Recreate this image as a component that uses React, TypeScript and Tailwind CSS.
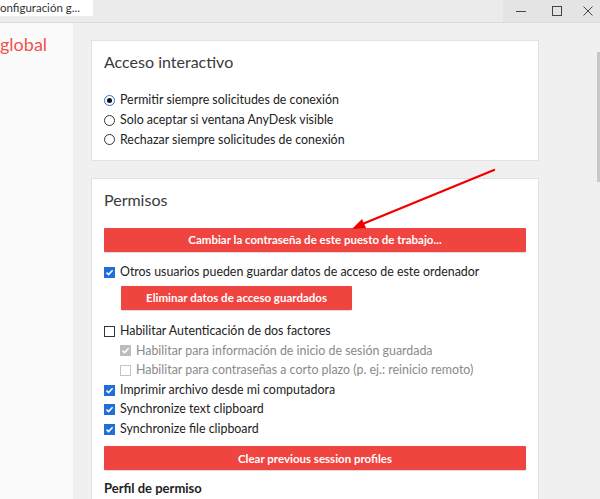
import React from "react";

const font = { fontFamily: 'Lato, "Noto Sans", Arial, sans-serif' };

function Radio({ checked }: { checked?: boolean }) {
  return checked ? (
    <span className="w-[11px] h-[11px] rounded-full border border-[#2b6fd6] flex items-center justify-center shrink-0 bg-white">
      <span className="w-[5px] h-[5px] rounded-full bg-[#111]" />
    </span>
  ) : (
    <span className="w-[11px] h-[11px] rounded-full border border-[#333] shrink-0 bg-white" />
  );
}

function Check({ state }: { state: "on" | "off" | "dis-on" | "dis-off" }) {
  if (state === "on" || state === "dis-on") {
    return (
      <span
        className={
          "w-[11px] h-[11px] flex items-center justify-center shrink-0 " +
          (state === "on" ? "bg-[#1f6fd8]" : "bg-[#bdbdbd]")
        }
      >
        <svg width="9" height="9" viewBox="0 0 9 9">
          <path d="M1.5 4.6 L3.6 6.6 L7.6 2.2" stroke="#fff" strokeWidth="1.5" fill="none" />
        </svg>
      </span>
    );
  }
  return (
    <span
      className={
        "w-[11px] h-[11px] border shrink-0 bg-white " +
        (state === "off" ? "border-[#333]" : "border-[#c4c4c4]")
      }
    />
  );
}

function Row({ children, icon, dim }: { children: React.ReactNode; icon: React.ReactNode; dim?: boolean }) {
  return (
    <div className={"flex items-center gap-[5px] h-[19.6px] text-[12.4px] " + (dim ? "text-[#8a8a8a]" : "text-[#222]")}>
      {icon}
      <span className="whitespace-nowrap">{children}</span>
    </div>
  );
}

function RedButton({ children, className }: { children: React.ReactNode; className?: string }) {
  return (
    <div
      className={
        "h-[24px] bg-[#ef4440] text-white text-[11.5px] font-bold flex items-center justify-center rounded-[1px] shadow-[0_1px_1px_rgba(0,0,0,0.15)] " +
        (className || "")
      }
    >
      {children}
    </div>
  );
}

export default function App() {
  return (
    <div className="w-[600px] h-[499px] overflow-hidden bg-[#f0f0f0] relative flex flex-col" style={font}>
      {/* title bar */}
      <div className="h-[23px] flex shrink-0 bg-[#ebebeb] border-b border-[#dadada]">
        <div className="w-[93px] h-[16px] bg-white overflow-hidden flex items-center">
          <span className="text-[11.5px] text-[#333] whitespace-nowrap">onfiguración g...</span>
        </div>
        <div className="flex-1" />
        <div className="w-[97px] h-full bg-[#e4e4e4] flex items-center">
          <div className="w-[36px] flex justify-center">
            <svg width="10" height="10" viewBox="0 0 10 10">
              <path d="M0 5.5 H10" stroke="#444" strokeWidth="1" />
            </svg>
          </div>
          <div className="w-[36px] flex justify-center">
            <svg width="10" height="10" viewBox="0 0 10 10">
              <rect x="0.5" y="0.5" width="9" height="9" stroke="#444" fill="none" />
            </svg>
          </div>
          <div className="w-[25px] flex justify-center">
            <svg width="10" height="10" viewBox="0 0 10 10">
              <path d="M0.5 0.5 L9.5 9.5 M9.5 0.5 L0.5 9.5" stroke="#444" strokeWidth="1" />
            </svg>
          </div>
        </div>
      </div>

      <div className="flex flex-1 min-h-0">
        {/* sidebar */}
        <div className="w-[73px] bg-[#fafafa] overflow-hidden shrink-0 pt-[10px]">
          <div className="text-[18px] text-[#f0524f] whitespace-nowrap leading-[22px]">global</div>
        </div>

        {/* main */}
        <div className="flex-1 pl-[18px] pt-[17px] flex min-w-0">
          <div className="w-[448px] flex flex-col gap-[17px] shrink-0">
            {/* card 1 */}
            <div className="h-[121px] shrink-0 bg-white border border-[#e2e2e2] px-[12px] pt-[10px]">
              <div className="text-[16px] text-[#3a3a3a] leading-[22px]">Acceso interactivo</div>
              <div className="mt-[18px] flex flex-col">
                <Row icon={<Radio checked />}>Permitir siempre solicitudes de conexión</Row>
                <Row icon={<Radio />}>Solo aceptar si ventana AnyDesk visible</Row>
                <Row icon={<Radio />}>Rechazar siempre solicitudes de conexión</Row>
              </div>
            </div>

            {/* card 2 */}
            <div className="flex-1 bg-white border border-[#e2e2e2] px-[12px] pt-[10px]">
              <div className="text-[16px] text-[#3a3a3a] leading-[22px]">Permisos</div>
              <RedButton className="mt-[17px]">Cambiar la contraseña de este puesto de trabajo...</RedButton>
              <div className="mt-[11px]">
                <Row icon={<Check state="on" />}>Otros usuarios pueden guardar datos de acceso de este ordenador</Row>
              </div>
              <RedButton className="mt-[3px] ml-[17px] w-[231px]">Eliminar datos de acceso guardados</RedButton>
              <div className="mt-[12px] flex flex-col">
                <Row icon={<Check state="off" />}>Habilitar Autenticación de dos factores</Row>
                <div className="pl-[16px] flex flex-col">
                  <Row dim icon={<Check state="dis-on" />}>Habilitar para información de inicio de sesión guardada</Row>
                  <Row dim icon={<Check state="dis-off" />}>Habilitar para contraseñas a corto plazo (p. ej.: reinicio remoto)</Row>
                </div>
                <Row icon={<Check state="on" />}>Imprimir archivo desde mi computadora</Row>
                <Row icon={<Check state="on" />}>Synchronize text clipboard</Row>
                <Row icon={<Check state="on" />}>Synchronize file clipboard</Row>
              </div>
              <RedButton className="mt-[7px]">Clear previous session profiles</RedButton>
              <div className="mt-[9px] text-[13px] font-bold text-[#222]">Perfil de permiso</div>
            </div>
          </div>
          <div className="flex-1" />
          {/* scrollbar */}
          <div className="w-[4px] flex flex-col items-center pt-[8px]">
            <div className="w-[3px] h-[130px] bg-[#c8c8c8] mt-[4px]" />
          </div>
        </div>
      </div>

      {/* annotation arrow */}
      <svg className="absolute left-0 top-0 pointer-events-none" width="600" height="499">
        <line x1="494" y1="170" x2="360" y2="225" stroke="#f20000" strokeWidth="2.4" strokeLinecap="round" />
        <polygon points="352,229 362,219 366,228" fill="#f20000" />
      </svg>
    </div>
  );
}
